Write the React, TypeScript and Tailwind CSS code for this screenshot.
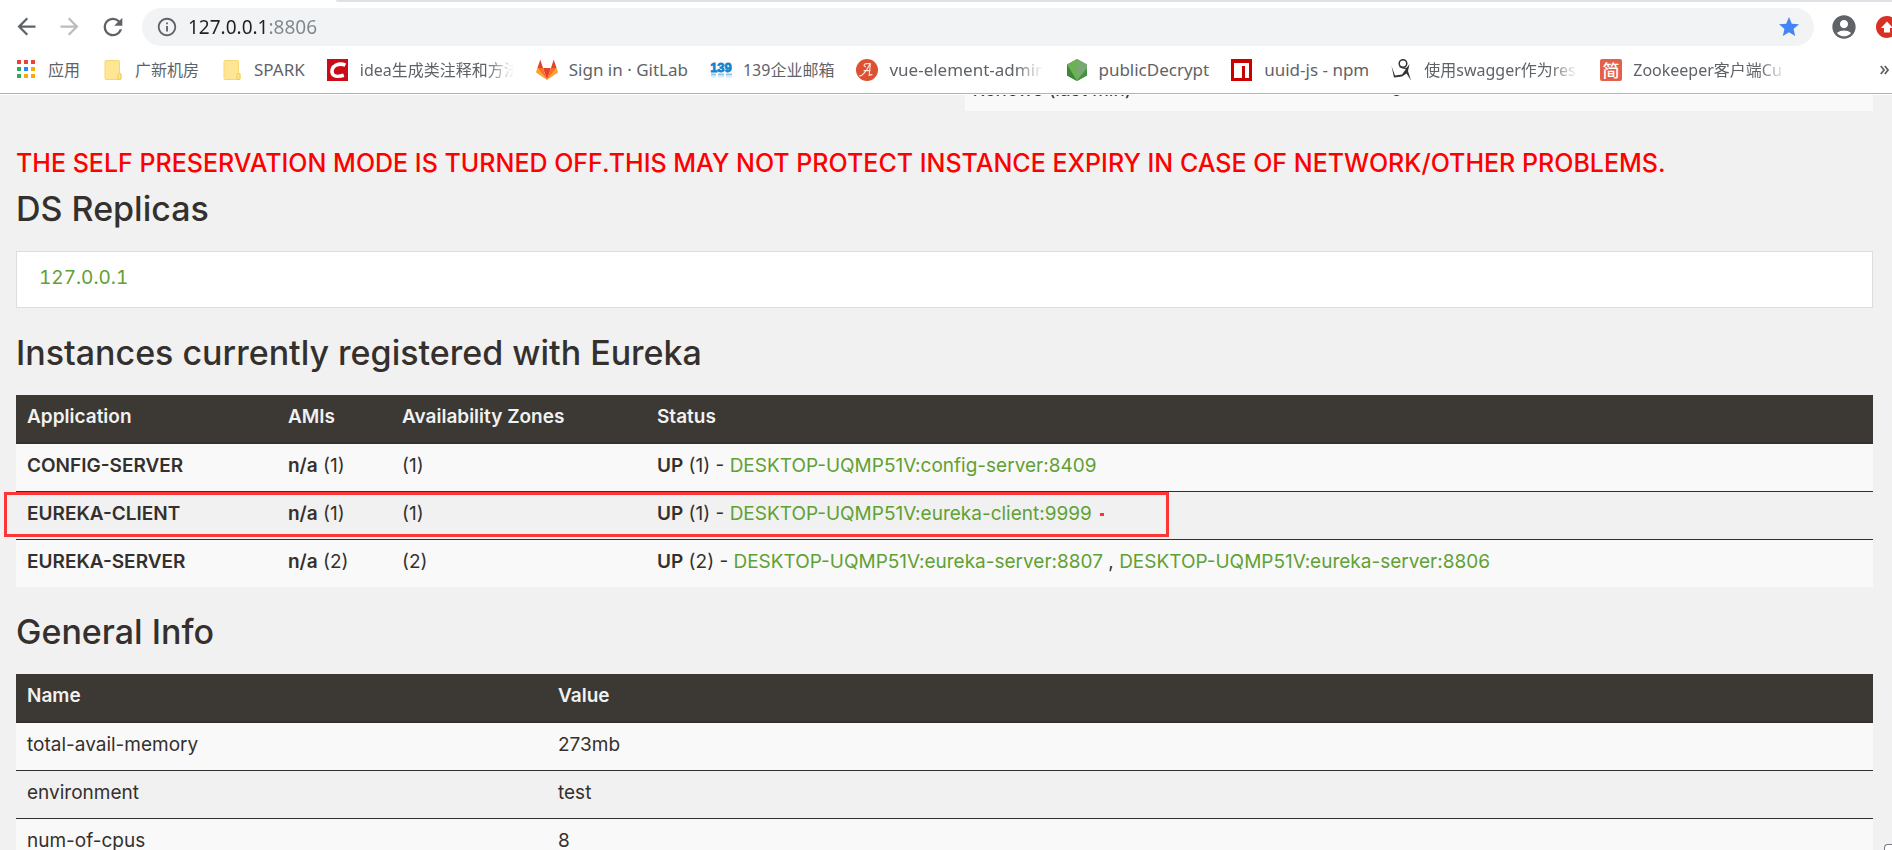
import type { ReactNode } from "react";
import {
  MdArrowBack,
  MdArrowForward,
  MdRefresh,
  MdInfoOutline,
  MdStar,
  MdAccountCircle,
} from "react-icons/md";

function AppsIcon() {
  const cells = [
    "#ea4335", "#ea4335", "#ea4335",
    "#34a853", "#1a8cff", "#f9ab00",
    "#34a853", "#f9ab00", "#f9ab00",
  ];
  return (
    <svg width="22" height="22" viewBox="0 0 22 22">
      {cells.map((fill, i) => (
        <rect key={i} x={2 + (i % 3) * 7} y={1 + Math.floor(i / 3) * 7} width="4" height="4" fill={fill} />
      ))}
    </svg>
  );
}

function FolderIcon() {
  return (
    <svg width="22" height="22" viewBox="0 0 22 22">
      <path d="M3 2.5Q3 1.5 4 1.5H16.5Q17.5 1.5 17.5 2.5V14.5H19V19.5Q19 20.5 18 20.5H4Q3 20.5 3 19.5Z" fill="#ffe694" stroke="#f7d774" />
      <path d="M16 20.3V16.2Q16 14.5 17.5 14.5Q19 14.5 19 16.2V19.5Q19 20.5 18 20.5Z" fill="#ffe694" stroke="#f2cb52" />
    </svg>
  );
}

function CsdnIcon() {
  return (
    <svg width="22" height="22" viewBox="0 0 22 22">
      <rect width="21" height="22" fill="#ca0c16" />
      <path d="M18.4 6.2C15.5 4.9 11.8 4.9 9 6.1C5.2 7.8 4 12.4 5.6 15.1C7.3 17.8 12.6 17.6 16.8 16.2" fill="none" stroke="#fff" strokeWidth="3.6" />
    </svg>
  );
}

function GitlabIcon() {
  return (
    <svg width="22" height="22" viewBox="0 0 22 22">
      <path d="M11 21L7 9H15Z" fill="#e24329" />
      <path d="M11 21L7 9H1.4Z" fill="#fc6d26" />
      <path d="M1.4 9L0.1 12.7Q0 13.3 0.5 13.7L11 21Z" fill="#fca326" />
      <path d="M1.4 9H7L4.6 1.4Q4.3 0.8 4 1.4Z" fill="#e24329" />
      <path d="M11 21L15 9H20.6Z" fill="#fc6d26" />
      <path d="M20.6 9L21.9 12.7Q22 13.3 21.5 13.7L11 21Z" fill="#fca326" />
      <path d="M20.6 9H15L17.4 1.4Q17.7 0.8 18 1.4Z" fill="#e24329" />
    </svg>
  );
}

function MailIcon() {
  return (
    <svg width="22" height="22" viewBox="0 0 22 22">
      <text x="11" y="13" textAnchor="middle" fontFamily="Liberation Sans, sans-serif" fontWeight="700" fontSize="13" fill="#1583cf" stroke="#1583cf" strokeWidth="0.8">
        139
      </text>
      <path d="M1 15.5H6M8 15.5H14M16 15.5H22" stroke="#8cc4ea" strokeWidth="2" />
      <path d="M1 17.5H6M8 17.5H14M16 17.5H22" stroke="#d6eaf8" strokeWidth="2" />
    </svg>
  );
}

function VueAdminIcon() {
  return (
    <svg width="22" height="22" viewBox="0 0 22 22">
      <circle cx="11" cy="11" r="11" fill="#dd5132" />
      <path d="M3.5 16.8C7 17.5 10.5 11 14.4 4.5L13.2 16.2L16 15.6M8 11.6H14M9.4 7.6C7.2 7.2 7.8 4.6 10.6 4.6L14.4 4.5" fill="none" stroke="#fbe6e0" strokeWidth="1.1" strokeLinecap="round" />
    </svg>
  );
}

function NodeIcon() {
  return (
    <svg width="22" height="22" viewBox="0 0 22 22">
      <path d="M12 0L22 5.5V16.5L12 22L2 16.5V5.5Z" fill="#5fa04e" />
      <path d="M2 5.5L12 0L22 5.5L12 22Z" fill="#6cb255" />
      <path d="M2 5.5L12 22L2 16.5Z" fill="#3c873a" />
      <path d="M22 5.5L12 22L22 16.5Z" fill="#4a9148" />
      <path d="M13 1L22 5.5V9L13 20Z" fill="#7aa874" />
    </svg>
  );
}

function NpmIcon() {
  return (
    <svg width="22" height="22" viewBox="0 0 22 22">
      <rect x="0" width="21" height="22" fill="#cb0000" />
      <path d="M3 4H18V19H14V7H11V19H3Z" fill="#fff" />
    </svg>
  );
}

function FigureIcon() {
  return (
    <svg width="22" height="22" viewBox="0 0 22 22">
      <circle cx="12" cy="4.5" r="3.8" fill="none" stroke="#333" strokeWidth="1.5" />
      <path d="M0.5 7L4 16.5L11 15.5L18.5 5L17 12L20 21.5L15.5 14.5L11 17.5L3 18.6Z" fill="#333" />
      <path d="M8.5 7.5Q12 9.8 16.5 9.3" fill="none" stroke="#333" strokeWidth="1.2" />
    </svg>
  );
}

function JianshuIcon() {
  return (
    <svg width="22" height="22" viewBox="0 0 22 22">
      <rect width="22" height="22" rx="2" fill="#e5604a" />
      <text x="11" y="17.5" textAnchor="middle" fontFamily="Noto Sans CJK SC, sans-serif" fontWeight="500" fontSize="17" fill="#fff">
        简
      </text>
    </svg>
  );
}

type Bookmark = { label: string; icon: ReactNode; latin?: boolean; faded?: boolean };

const bookmarks: Bookmark[] = [
  { label: "应用", icon: <AppsIcon /> },
  { label: "广新机房", icon: <FolderIcon /> },
  { label: "SPARK", icon: <FolderIcon />, latin: true },
  { label: "idea生成类注释和方法", icon: <CsdnIcon />, faded: true },
  { label: "Sign in · GitLab", icon: <GitlabIcon />, latin: true },
  { label: "139企业邮箱", icon: <MailIcon /> },
  { label: "vue-element-admin", icon: <VueAdminIcon />, latin: true, faded: true },
  { label: "publicDecrypt", icon: <NodeIcon />, latin: true },
  { label: "uuid-js - npm", icon: <NpmIcon />, latin: true },
  { label: "使用swagger作为res", icon: <FigureIcon />, faded: true },
  { label: "Zookeeper客户端Cu", icon: <JianshuIcon />, faded: true },
];

function BookmarkLink({ label, icon, latin, faded }: Bookmark) {
  return (
    <a href="#" className="flex shrink-0 items-center gap-[11px]">
      <span className="shrink-0">{icon}</span>
      <span
        className={[
          "whitespace-nowrap leading-7",
          latin ? "text-[17px]" : "text-base",
          faded ? "w-[154px] overflow-hidden [mask-image:linear-gradient(90deg,#000_82%,transparent)]" : "",
        ].join(" ")}
      >
        {label}
      </span>
    </a>
  );
}

function BrowserChrome() {
  return (
    <header className="shrink-0 border-b border-[#b4b4b6] bg-white font-['Noto_Sans','Noto_Sans_CJK_SC',sans-serif] text-[#5f6368]">
      <div className="ml-[336px] h-[2px] rounded-bl bg-[#dee1e6]" />
      <div className="flex items-center pt-[6px]">
        <nav className="mr-2 flex pl-[5px]">
          <button aria-label="Back" className="flex w-[43px] justify-center">
            <MdArrowBack size={27} />
          </button>
          <button aria-label="Forward" className="flex w-[43px] justify-center text-[#babcbe]">
            <MdArrowForward size={27} />
          </button>
          <button aria-label="Reload" className="flex w-[43px] justify-center">
            <MdRefresh size={28} />
          </button>
        </nav>
        <div className="flex h-[38px] flex-1 items-center gap-[10px] rounded-full bg-[#f1f3f4] pr-[13px] pl-[14px]">
          <MdInfoOutline size={22} />
          <input
            aria-label="Address"
            defaultValue="127.0.0.1:8806"
            className="min-w-0 flex-1 bg-[linear-gradient(90deg,#202124_81px,#80868b_81px)] bg-clip-text text-[19px] leading-7 text-transparent outline-none"
          />
          <button aria-label="Bookmark this page" className="text-[#4285f4]">
            <MdStar size={24} />
          </button>
        </div>
        <button aria-label="Profile" className="ml-4 shrink-0">
          <MdAccountCircle size={28} />
        </button>
        <button aria-label="Update" className="ml-[18px] w-4 shrink-0 overflow-hidden">
          <svg width="22" height="22" viewBox="0 0 22 22">
            <circle cx="11" cy="11" r="11" fill="#d93025" />
            <path d="M11 5.5L17 12H14V16.5H8V12H5Z" fill="#fff" />
          </svg>
        </button>
      </div>
      <div className="flex h-[47px] items-center gap-[22px] pt-px pr-[3px] pl-[15px]">
        {bookmarks.map((b) => (
          <BookmarkLink key={b.label} {...b} />
        ))}
        <button aria-label="More bookmarks" className="ml-auto shrink-0">
          <svg width="9" height="10" viewBox="0 0 9 10">
            <path d="M0.8 1L4 5L0.8 9M4.8 1L8 5L4.8 9" fill="none" stroke="#5f6368" strokeWidth="1.8" />
          </svg>
        </button>
      </div>
    </header>
  );
}

const headRow = "border-b-2 border-[#34302d] bg-[#3c3833] text-left text-[#f1f1f1]";
const bodyRow = "border-[#34302d] odd:bg-[#f9f9f9] not-first:border-t";
const cell = "px-[11px] pt-2 pb-3";
const headCell = "px-[11px] pt-2 pb-3 font-semibold";

function Heading({ children }: { children: ReactNode }) {
  return <h1 className="mb-[22px] text-[34px] leading-[41px] font-medium">{children}</h1>;
}

const applications = [
  { name: "CONFIG-SERVER", count: 1, instances: ["DESKTOP-UQMP51V:config-server:8409"] },
  { name: "EUREKA-CLIENT", count: 1, instances: ["DESKTOP-UQMP51V:eureka-client:9999"] },
  {
    name: "EUREKA-SERVER",
    count: 2,
    instances: ["DESKTOP-UQMP51V:eureka-server:8807", "DESKTOP-UQMP51V:eureka-server:8806"],
  },
];

function InstancesTable() {
  return (
    <div className="relative">
      <table className="w-full table-fixed">
        <thead>
          <tr className={headRow}>
            <th className={`${headCell} w-[261px]`}>Application</th>
            <th className={`${headCell} w-[114px]`}>AMIs</th>
            <th className={`${headCell} w-[255px]`}>Availability Zones</th>
            <th className={headCell}>Status</th>
          </tr>
        </thead>
        <tbody>
          {applications.map((app) => (
            <tr key={app.name} className={bodyRow}>
              <td className={`${cell} font-semibold`}>{app.name}</td>
              <td className={`${cell} whitespace-nowrap`}>
                <b className="font-semibold">n/a</b> ({app.count})
              </td>
              <td className={cell}>({app.count})</td>
              <td className={cell}>
                <b className="font-semibold">UP</b> ({app.count}) -{" "}
                {app.instances.map((id, i) => (
                  <span key={id}>
                    {i > 0 && " , "}
                    <a href="#" className="text-[#5fa134]">
                      {id}
                    </a>
                  </span>
                ))}
              </td>
            </tr>
          ))}
        </tbody>
      </table>
      <div className="pointer-events-none absolute top-[97px] -left-3 h-[45px] w-[1165px] border-3 border-[#fc3536]" />
      <div className="pointer-events-none absolute top-[118px] left-[1084px] h-[3px] w-1 bg-[#fc3536]" />
    </div>
  );
}

const generalInfo = [
  ["total-avail-memory", "273mb"],
  ["environment", "test"],
  ["num-of-cpus", "8"],
];

function GeneralInfoTable() {
  return (
    <table className="w-full table-fixed">
      <thead>
        <tr className={headRow}>
          <th className={`${headCell} w-[531px]`}>Name</th>
          <th className={headCell}>Value</th>
        </tr>
      </thead>
      <tbody>
        {generalInfo.map(([name, value]) => (
          <tr key={name} className={bodyRow}>
            <td className={cell}>{name}</td>
            <td className={cell}>{value}</td>
          </tr>
        ))}
      </tbody>
    </table>
  );
}

export default function App() {
  return (
    <div className="relative flex h-screen flex-col overflow-hidden bg-[#f1f1f1]">
      <BrowserChrome />
      <main className="min-h-0 flex-1 overflow-hidden border-t border-white pr-[19px] pl-4 font-['Inter',sans-serif] text-[19px] leading-[27px] text-[#34302d]">
        <div className="flex h-4 items-end justify-end overflow-hidden">
          <dl className="flex w-[calc(50%-20px)] bg-[#f9f9f9] px-2 pb-2">
            <dt className="w-[418px]">Renews (last min)</dt>
            <dd>0</dd>
          </dl>
        </div>
        <h4 className="mt-[37px] text-[25px] leading-[30px] font-medium whitespace-nowrap text-[#ff0000]">
          THE SELF PRESERVATION MODE IS TURNED OFF.THIS MAY NOT PROTECT INSTANCE EXPIRY IN CASE OF NETWORK/OTHER PROBLEMS.
        </h4>
        <section className="mt-[10px]">
          <Heading>DS Replicas</Heading>
          <ul className="border border-[#dddddd] bg-white px-[22px] pt-3 pb-4 tabular-nums">
            <li>
              <a href="#" className="text-[#5fa134]">
                127.0.0.1
              </a>
            </li>
          </ul>
        </section>
        <section className="mt-6">
          <Heading>Instances currently registered with Eureka</Heading>
          <InstancesTable />
        </section>
        <section className="mt-6">
          <Heading>General Info</Heading>
          <GeneralInfoTable />
        </section>
      </main>
      <div className="absolute right-0 bottom-0 h-[6px] w-2 rounded-tl border-t border-l border-[#777c82] bg-white" />
    </div>
  );
}
